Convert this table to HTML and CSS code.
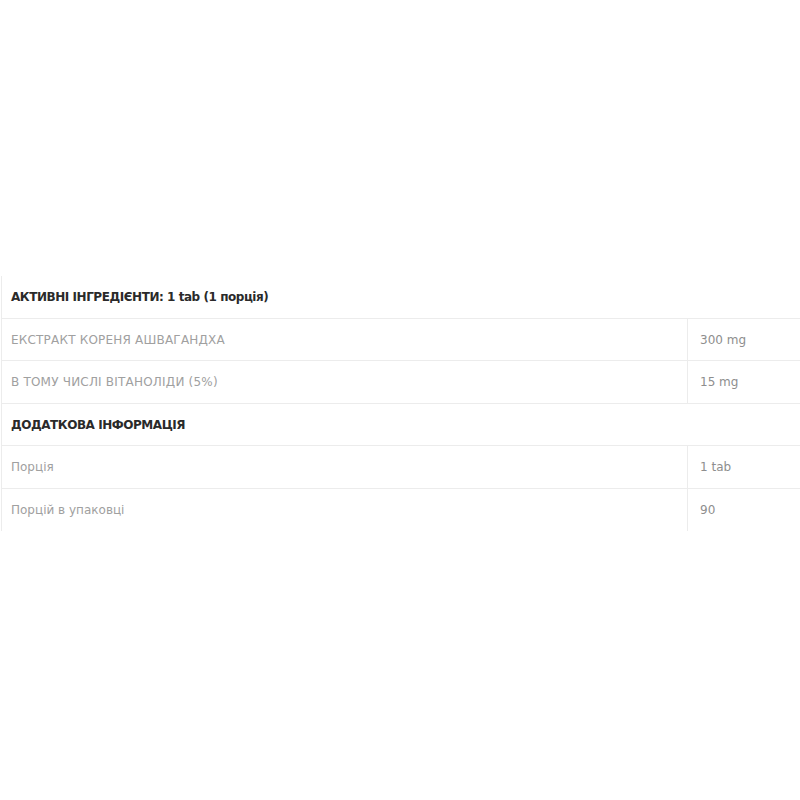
FILE: index.html
```html
<!DOCTYPE html>
<html lang="uk">
<head>
<meta charset="utf-8">
<link rel="stylesheet" href="styles.css">
</head>
<body>
<div class="page">
  <div class="table">
    <div class="row head"><div class="cell full">АКТИВНІ ІНГРЕДІЄНТИ: 1 tab (1 порція)</div></div>
    <div class="row"><div class="cell name caps">ЕКСТРАКТ КОРЕНЯ АШВАГАНДХА</div><div class="cell val">300 mg</div></div>
    <div class="row"><div class="cell name caps">В ТОМУ ЧИСЛІ ВІТАНОЛІДИ (5%)</div><div class="cell val">15 mg</div></div>
    <div class="row head"><div class="cell full">ДОДАТКОВА ІНФОРМАЦІЯ</div></div>
    <div class="row"><div class="cell name">Порція</div><div class="cell val">1 tab</div></div>
    <div class="row last"><div class="cell name">Порцій в упаковці</div><div class="cell val">90</div></div>
  </div>
</div>
</body>
</html>
```

FILE: styles.css
```css
html, body {
  margin: 0;
  padding: 0;
  background: #fff;
}
.page {
  width: 800px;
  height: 800px;
  padding-top: 276px;
  box-sizing: border-box;
}
.table {
  border-left: 1px solid #ececec;
  margin-left: 1px;
  font-family: "DejaVu Sans", "Liberation Sans", sans-serif;
  font-size: 12px;
}
.row {
  display: grid;
  grid-template-columns: 686px 1fr;
  height: 42.5px;
  box-sizing: border-box;
  border-bottom: 1px solid #ececec;
}
.row.last {
  border-bottom: none;
}
.cell {
  display: flex;
  align-items: center;
  padding-left: 9px;
  padding-top: 1px;
}
.full {
  grid-column: 1 / -1;
}
.head .cell {
  color: #2a2a2a;
  font-weight: 700;
  letter-spacing: -0.45px;
}
.name {
  color: #a0a0a0;
  border-right: 1px solid #ececec;
}
.caps {
  letter-spacing: 0.2px;
}
.val {
  color: #8e8e8e;
  padding-left: 12px;
}
```
